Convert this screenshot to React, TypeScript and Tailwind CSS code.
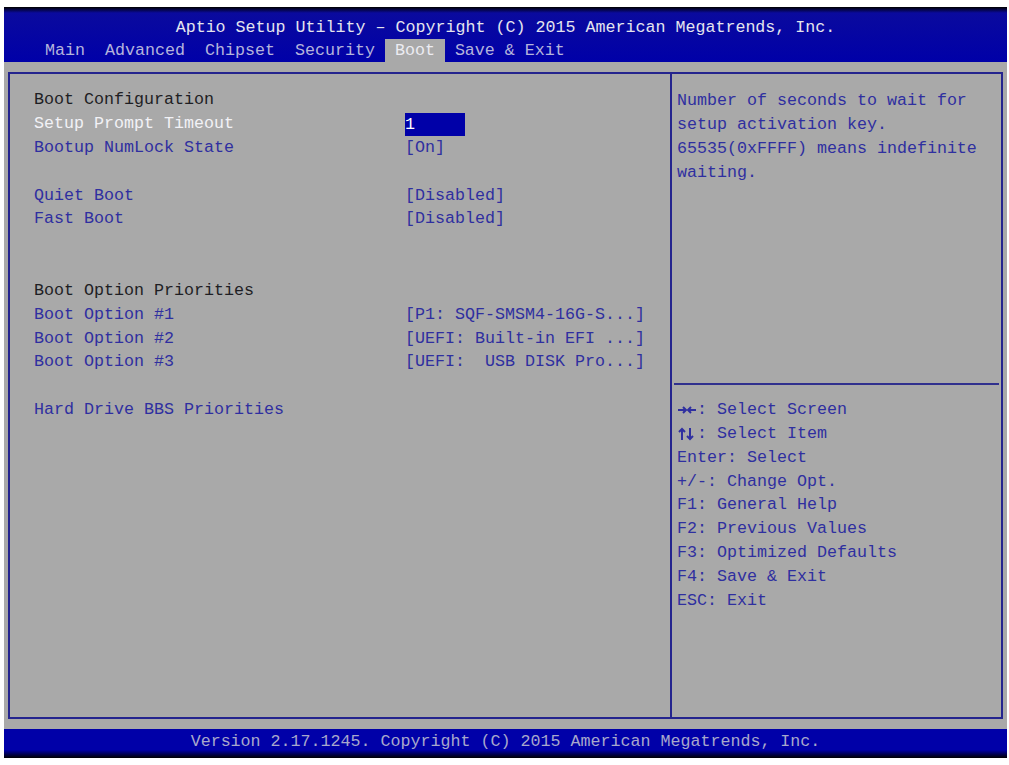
import React from "react";

const mono = { fontFamily: '"Liberation Mono", "DejaVu Sans Mono", monospace' };

type Row =
  | { kind: "head"; text: string }
  | { kind: "item"; label: string; value?: string; selected?: boolean }
  | { kind: "blank" };

const rows: Row[] = [
  { kind: "head", text: "Boot Configuration" },
  { kind: "item", label: "Setup Prompt Timeout", value: "1", selected: true },
  { kind: "item", label: "Bootup NumLock State", value: "[On]" },
  { kind: "blank" },
  { kind: "item", label: "Quiet Boot", value: "[Disabled]" },
  { kind: "item", label: "Fast Boot", value: "[Disabled]" },
  { kind: "blank" },
  { kind: "blank" },
  { kind: "head", text: "Boot Option Priorities" },
  { kind: "item", label: "Boot Option #1", value: "[P1: SQF-SMSM4-16G-S...]" },
  { kind: "item", label: "Boot Option #2", value: "[UEFI: Built-in EFI ...]" },
  { kind: "item", label: "Boot Option #3", value: "[UEFI:  USB DISK Pro...]" },
  { kind: "blank" },
  { kind: "item", label: "Hard Drive BBS Priorities" },
];

const tabs = ["Main", "Advanced", "Chipset", "Security", "Boot", "Save & Exit"];

// left/right arrows, drawn
function HArrows() {
  return (
    <svg width="20" height="12" viewBox="0 0 20 12" className="inline-block">
      <path d="M1 6h8M6 3l3 3-3 3" stroke="currentColor" strokeWidth="2" fill="none" />
      <path d="M19 6h-8M14 3l-3 3 3 3" stroke="currentColor" strokeWidth="2" fill="none" />
    </svg>
  );
}

// up/down arrows, drawn
function VArrows() {
  return (
    <svg width="20" height="14" viewBox="0 0 20 14" className="inline-block">
      <path d="M5 13V2M2 5l3-3 3 3" stroke="currentColor" strokeWidth="2" fill="none" />
      <path d="M13 1v11M10 9l3 3 3-3" stroke="currentColor" strokeWidth="2" fill="none" />
    </svg>
  );
}

const keys: [React.ReactNode, string][] = [
  [<HArrows />, ": Select Screen"],
  [<VArrows />, ": Select Item"],
  [null, "Enter: Select"],
  [null, "+/-: Change Opt."],
  [null, "F1: General Help"],
  [null, "F2: Previous Values"],
  [null, "F3: Optimized Defaults"],
  [null, "F4: Save & Exit"],
  [null, "ESC: Exit"],
];

export default function App() {
  return (
    <div className="w-[1009px] h-[765px] bg-white pt-[7px] pl-[4px] overflow-hidden" style={mono}>
      <div className="w-[1003px] flex flex-col">
        {/* header */}
        <div className="h-[55px] bg-[linear-gradient(to_bottom,#000_0px,#0a0a9e_6px,#0000a8_100%)] pt-[9px] text-[16.67px] leading-[23px]">
          <div className="text-center text-[#e4e4ee] whitespace-pre">
            Aptio Setup Utility – Copyright (C) 2015 American Megatrends, Inc.
          </div>
          <div className="flex pl-[31px] whitespace-pre">
            {tabs.map((t) => (
              <div
                key={t}
                className={
                  t === "Boot"
                    ? "px-[10px] bg-[#a9a9a9] text-[#ececf2]"
                    : "px-[10px] text-[#b4b4dc]"
                }
              >
                {t}
              </div>
            ))}
          </div>
        </div>

        {/* body */}
        <div className="h-[667px] bg-[#a9a9a9] pt-[10px] px-[4px] pb-[10px]">
          <div className="h-full border-2 border-[#24248e] flex text-[16.67px] leading-[23.85px]">
            <div className="w-[662px] flex-none border-r-2 border-[#24248e] pl-[24px] pt-[14px]">
              {rows.map((r, i) => {
                if (r.kind === "blank") return <div key={i} className="h-[23.85px]" />;
                if (r.kind === "head")
                  return (
                    <div key={i} className="text-[#1e1e24] whitespace-pre">
                      {r.text}
                    </div>
                  );
                return (
                  <div key={i} className="flex whitespace-pre">
                    <div className={`w-[371px] ${r.selected ? "text-[#f2f2f6]" : "text-[#2f2fa0]"}`}>
                      {r.label}
                    </div>
                    {r.value &&
                      (r.selected ? (
                        <div className="w-[60px] bg-[#0000a8] text-white mt-[1px] h-[23px]">{r.value}</div>
                      ) : (
                        <div className="text-[#2f2fa0]">{r.value}</div>
                      ))}
                  </div>
                );
              })}
            </div>
            <div className="flex-1 flex flex-col text-[#2f2fa0]">
              <div className="h-[311px] pl-[3px] pt-[15px] border-b-2 border-[#30308e] mx-[2px] whitespace-pre">
                <div>Number of seconds to wait for</div>
                <div>setup activation key.</div>
                <div>65535(0xFFFF) means indefinite</div>
                <div>waiting.</div>
              </div>
              <div className="pl-[5px] pt-[13px] whitespace-pre">
                {keys.map(([a, k]) => (
                  <div key={k} className="flex items-center h-[23.85px]">
                    {a}
                    <span>{k}</span>
                  </div>
                ))}
              </div>
            </div>
          </div>
        </div>

        {/* footer */}
        <div className="h-[29px] bg-[linear-gradient(to_bottom,#0000a8_0px,#0000a8_21px,#000_29px)] text-center text-[16.67px] leading-[26px] text-[#a8a8cc] whitespace-pre">
          Version 2.17.1245. Copyright (C) 2015 American Megatrends, Inc.
        </div>
      </div>
    </div>
  );
}
